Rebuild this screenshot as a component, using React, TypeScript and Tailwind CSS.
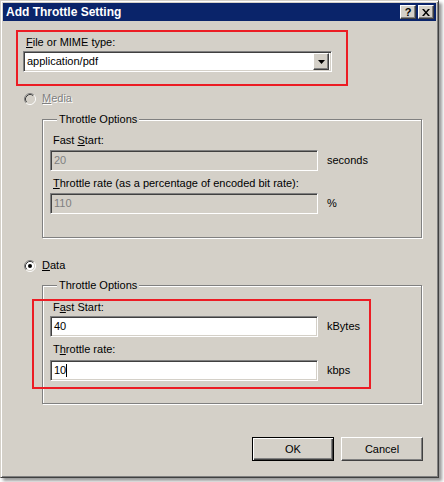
import React from 'react';

const sunken =
    'border border-t-[#808080] border-l-[#808080] border-r-white border-b-white shadow-[inset_1px_1px_0_#404040,inset_-1px_-1px_0_#d4d0c8]';
const raised =
    'border border-t-white border-l-white border-r-[#404040] border-b-[#404040] shadow-[inset_-1px_-1px_0_#808080] bg-[#d4d0c8]';
const etched = 'border border-[#808080] shadow-[1px_1px_0_#fff,inset_1px_1px_0_#fff]';

const Radio = ({ checked, disabled }: { checked?: boolean; disabled?: boolean }) => (
    <svg width="12" height="12" viewBox="0 0 12 12" className="shrink-0">
        <circle cx="6" cy="6" r="4.5" fill={disabled ? '#d4d0c8' : '#fff'} />
        <path d="M2.11 9.89 A5.5 5.5 0 0 1 9.89 2.11" stroke="#808080" fill="none" />
        <path d="M9.89 2.11 A5.5 5.5 0 0 1 2.11 9.89" stroke="#fff" fill="none" />
        <path d="M2.82 9.18 A4.5 4.5 0 0 1 9.18 2.82" stroke="#404040" fill="none" />
        <path d="M9.18 2.82 A4.5 4.5 0 0 1 2.82 9.18" stroke="#d4d0c8" fill="none" />
        {checked && <circle cx="6" cy="6" r="2" fill="#000" />}
    </svg>
);

const TextBox = ({ value, disabled, caret }: { value: string; disabled?: boolean; caret?: boolean }) => (
    <div
        className={`${sunken} w-[268px] h-[21px] flex items-center pl-[3px] ${
            disabled ? 'bg-[#d4d0c8] text-[#808080]' : 'bg-white text-black'
        }`}
    >
        <span>{value}</span>
        {caret && <span className="w-px h-[13px] bg-black" />}
    </div>
);

const Field = ({
    label,
    value,
    unit,
    disabled,
    caret,
    labelClass,
    inputClass,
}: {
    label: React.ReactNode;
    value: string;
    unit: string;
    disabled?: boolean;
    caret?: boolean;
    labelClass: string;
    inputClass: string;
}) => (
    <>
        <div className={`leading-[13px] pl-[3px] ${labelClass}`}>{label}</div>
        <div className={`flex items-center gap-[9px] ${inputClass}`}>
            <TextBox value={value} disabled={disabled} caret={caret} />
            <span>{unit}</span>
        </div>
    </>
);

const Legend = () => (
    <div className="-mt-[7px] ml-[7px] w-fit px-[2px] bg-[#d4d0c8] leading-[13px]">Throttle Options</div>
);

const App = () => {
    return (
        <div className="w-[444px] h-[482px] bg-white font-['Liberation_Sans',Arial,sans-serif] text-[11px] text-black">
            <div className="w-[439px] h-[478px] bg-[#d4d0c8] border border-t-[#d4d0c8] border-l-[#d4d0c8] border-r-[#404040] border-b-[#404040] shadow-[inset_1px_1px_0_#fff,inset_-1px_-1px_0_#808080,3px_3px_3px_rgba(0,0,0,0.4)] p-[2px] flex flex-col">
                {/* title bar */}
                <div className="h-[18px] bg-[#0a246a] flex items-center justify-between pl-[3px] pr-[2px]">
                    <span className="text-white font-bold text-[12px] leading-none">Add Throttle Setting</span>
                    <div className="flex gap-[2px]">
                        <div className={`${raised} w-[16px] h-[14px] flex items-center justify-center font-bold text-[11px] leading-none`}>
                            ?
                        </div>
                        <div className={`${raised} w-[16px] h-[14px] flex items-center justify-center`}>
                            <svg width="8" height="7" viewBox="0 0 8 7">
                                <path d="M0 0h2l2 2.5L6 0h2L5 3.5 8 7H6L4 4.5 2 7H0l3-3.5z" fill="#000" />
                            </svg>
                        </div>
                    </div>
                </div>

                {/* file type */}
                <div className="mt-[9px] ml-[13px] w-[332px] h-[56px] border-2 border-[#ec1c24] pt-[4px]">
                    <div className="leading-[13px] pl-[8px]">
                        <u>F</u>ile or MIME type:
                    </div>
                    <div className={`${sunken} mt-[2px] ml-[5px] w-[309px] h-[21px] bg-white flex items-center justify-between pl-[3px] pr-[2px]`}>
                        <span>application/pdf</span>
                        <div className={`${raised} w-[16px] h-[17px] flex items-center justify-center`}>
                            <svg width="7" height="4" viewBox="0 0 7 4">
                                <path d="M0 0h7L3.5 4z" fill="#000" />
                            </svg>
                        </div>
                    </div>
                </div>

                {/* media */}
                <div className="mt-[6px] ml-[21px] h-[13px] flex items-center gap-[6px]">
                    <Radio disabled />
                    <span className="text-[#808080] [text-shadow:1px_1px_0_#fff]">
                        <u>M</u>edia
                    </span>
                </div>
                <div className={`${etched} mt-[14px] ml-[39px] w-[380px] pl-[7px] pb-[23px]`}>
                    <Legend />
                    <Field
                        label={
                            <>
                                Fast <u>S</u>tart:
                            </>
                        }
                        value="20"
                        unit="seconds"
                        disabled
                        labelClass="mt-[8px]"
                        inputClass="mt-[3px]"
                    />
                    <Field
                        label={
                            <>
                                <u>T</u>hrottle rate (as a percentage of encoded bit rate):
                            </>
                        }
                        value="110"
                        unit="%"
                        disabled
                        labelClass="mt-[6px]"
                        inputClass="mt-[3px]"
                    />
                </div>

                {/* data */}
                <div className="mt-[21px] ml-[21px] h-[13px] flex items-center gap-[6px]">
                    <Radio checked />
                    <span>
                        <u>D</u>ata
                    </span>
                </div>
                <div className={`${etched} mt-[13px] ml-[39px] w-[380px] pl-[7px] pb-[14px]`}>
                    <Legend />
                    <div className="mt-[7px] -ml-[18px] w-[339px] border-2 border-[#ec1c24] pl-[16px] pb-[6px]">
                        <Field
                            label={
                                <>
                                    F<u>a</u>st Start:
                                </>
                            }
                            value="40"
                            unit="kBytes"
                            labelClass=""
                            inputClass="mt-[2px]"
                        />
                        <Field
                            label={
                                <>
                                    T<u>h</u>rottle rate:
                                </>
                            }
                            value="10"
                            unit="kbps"
                            caret
                            labelClass="mt-[6px]"
                            inputClass="mt-[4px]"
                        />
                    </div>
                </div>

                {/* buttons */}
                <div className="mt-[33px] mr-[13px] flex justify-end gap-[7px]">
                    <button className="w-[82px] h-[24px] border border-black bg-[#d4d0c8] shadow-[inset_1px_1px_0_#fff,inset_-1px_-1px_0_#404040,inset_-2px_-2px_0_#808080]">
                        OK
                    </button>
                    <button className={`${raised} w-[82px] h-[24px]`}>Cancel</button>
                </div>
            </div>
        </div>
    );
};

export default App;
